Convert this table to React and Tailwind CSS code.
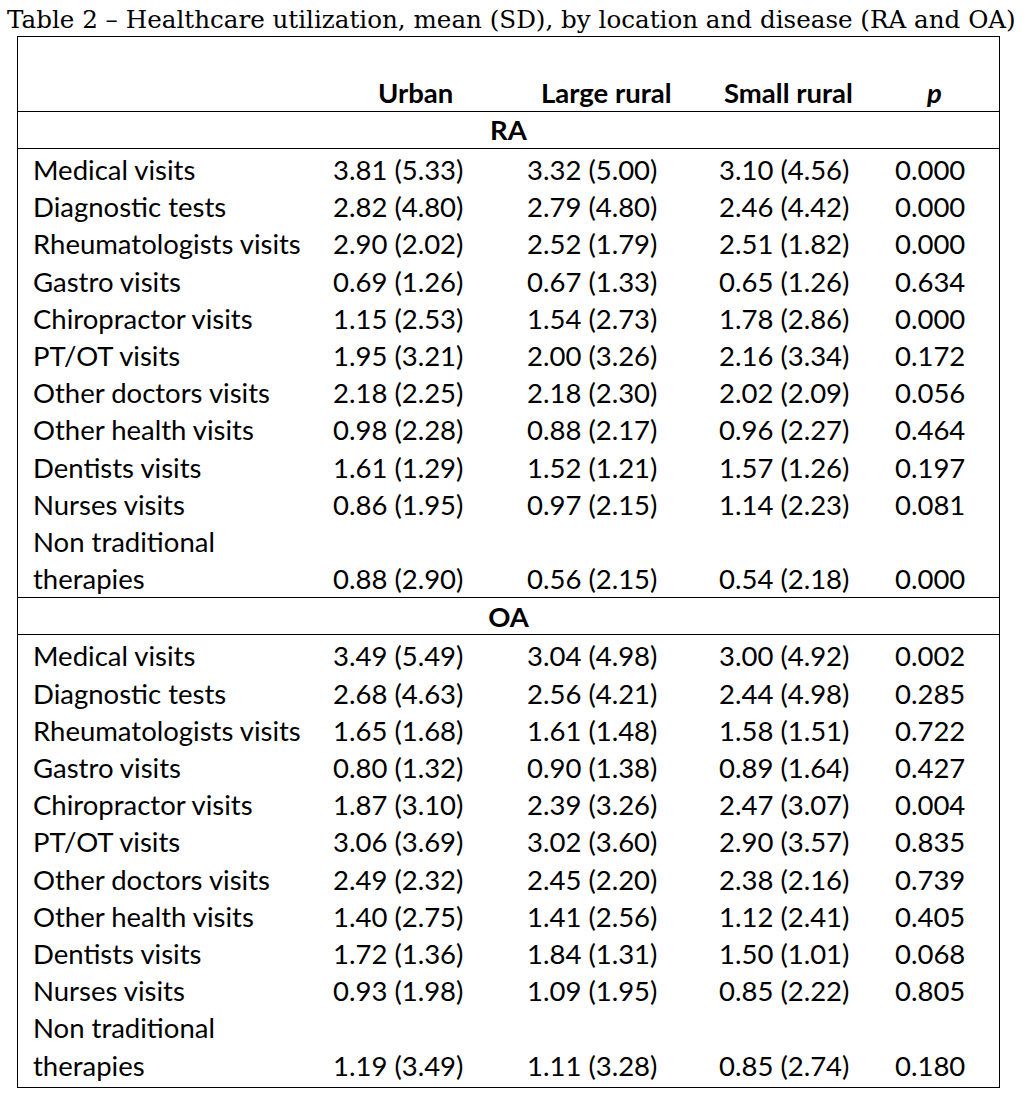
import React from 'react';

const ra = [
  ['Medical visits', '3.81 (5.33)', '3.32 (5.00)', '3.10 (4.56)', '0.000'],
  ['Diagnostic tests', '2.82 (4.80)', '2.79 (4.80)', '2.46 (4.42)', '0.000'],
  ['Rheumatologists visits', '2.90 (2.02)', '2.52 (1.79)', '2.51 (1.82)', '0.000'],
  ['Gastro visits', '0.69 (1.26)', '0.67 (1.33)', '0.65 (1.26)', '0.634'],
  ['Chiropractor visits', '1.15 (2.53)', '1.54 (2.73)', '1.78 (2.86)', '0.000'],
  ['PT/OT visits', '1.95 (3.21)', '2.00 (3.26)', '2.16 (3.34)', '0.172'],
  ['Other doctors visits', '2.18 (2.25)', '2.18 (2.30)', '2.02 (2.09)', '0.056'],
  ['Other health visits', '0.98 (2.28)', '0.88 (2.17)', '0.96 (2.27)', '0.464'],
  ['Dentists visits', '1.61 (1.29)', '1.52 (1.21)', '1.57 (1.26)', '0.197'],
  ['Nurses visits', '0.86 (1.95)', '0.97 (2.15)', '1.14 (2.23)', '0.081'],
  ['Non traditional|therapies', '0.88 (2.90)', '0.56 (2.15)', '0.54 (2.18)', '0.000'],
];

const oa = [
  ['Medical visits', '3.49 (5.49)', '3.04 (4.98)', '3.00 (4.92)', '0.002'],
  ['Diagnostic tests', '2.68 (4.63)', '2.56 (4.21)', '2.44 (4.98)', '0.285'],
  ['Rheumatologists visits', '1.65 (1.68)', '1.61 (1.48)', '1.58 (1.51)', '0.722'],
  ['Gastro visits', '0.80 (1.32)', '0.90 (1.38)', '0.89 (1.64)', '0.427'],
  ['Chiropractor visits', '1.87 (3.10)', '2.39 (3.26)', '2.47 (3.07)', '0.004'],
  ['PT/OT visits', '3.06 (3.69)', '3.02 (3.60)', '2.90 (3.57)', '0.835'],
  ['Other doctors visits', '2.49 (2.32)', '2.45 (2.20)', '2.38 (2.16)', '0.739'],
  ['Other health visits', '1.40 (2.75)', '1.41 (2.56)', '1.12 (2.41)', '0.405'],
  ['Dentists visits', '1.72 (1.36)', '1.84 (1.31)', '1.50 (1.01)', '0.068'],
  ['Nurses visits', '0.93 (1.98)', '1.09 (1.95)', '0.85 (2.22)', '0.805'],
  ['Non traditional|therapies', '1.19 (3.49)', '1.11 (3.28)', '0.85 (2.74)', '0.180'],
];

const cols = 'grid grid-cols-[315px_194px_192px_176px_1fr] items-end';

function Row({ row }) {
  const [label, ...vals] = row;
  const lines = label.split('|');
  return (
    <div className={cols}>
      <div className="pl-[15px]">
        {lines.map(l => (
          <div key={l}>{l}</div>
        ))}
      </div>
      {vals.map((v, i) => (
        <div key={i}>{v}</div>
      ))}
    </div>
  );
}

function Section({ title, rows, last }) {
  return (
    <>
      <div className="h-[37px] flex items-center justify-center font-bold border-b border-black">
        {title}
      </div>
      <div className={last ? 'pt-[2px] pb-[3px]' : 'pt-[2px] border-b border-black'}>
        {rows.map(r => (
          <Row key={r[0]} row={r} />
        ))}
      </div>
    </>
  );
}

export default function App() {
  return (
    <div className="w-[1026px] h-[1093px] bg-white text-black overflow-hidden">
      <div className="h-[36px] pl-[7px] whitespace-nowrap text-[24.6px] leading-[40px] font-['DejaVu_Serif',serif]">
        Table 2 – Healthcare utilization, mean (SD), by location and disease (RA and OA)
      </div>
      <div className="ml-[17px] w-[983px] border border-black font-['Lato',sans-serif] text-[27.5px] leading-[37.2px]">
        <div className={`${cols} h-[75px] font-bold border-b border-black`}>
          <div />
          <div className="pl-[45px]">Urban</div>
          <div className="pl-[14px]">Large rural</div>
          <div className="pl-[5px]">Small rural</div>
          <div className="pl-[32px] italic">p</div>
        </div>
        <Section title="RA" rows={ra} />
        <Section title="OA" rows={oa} last />
      </div>
    </div>
  );
}
